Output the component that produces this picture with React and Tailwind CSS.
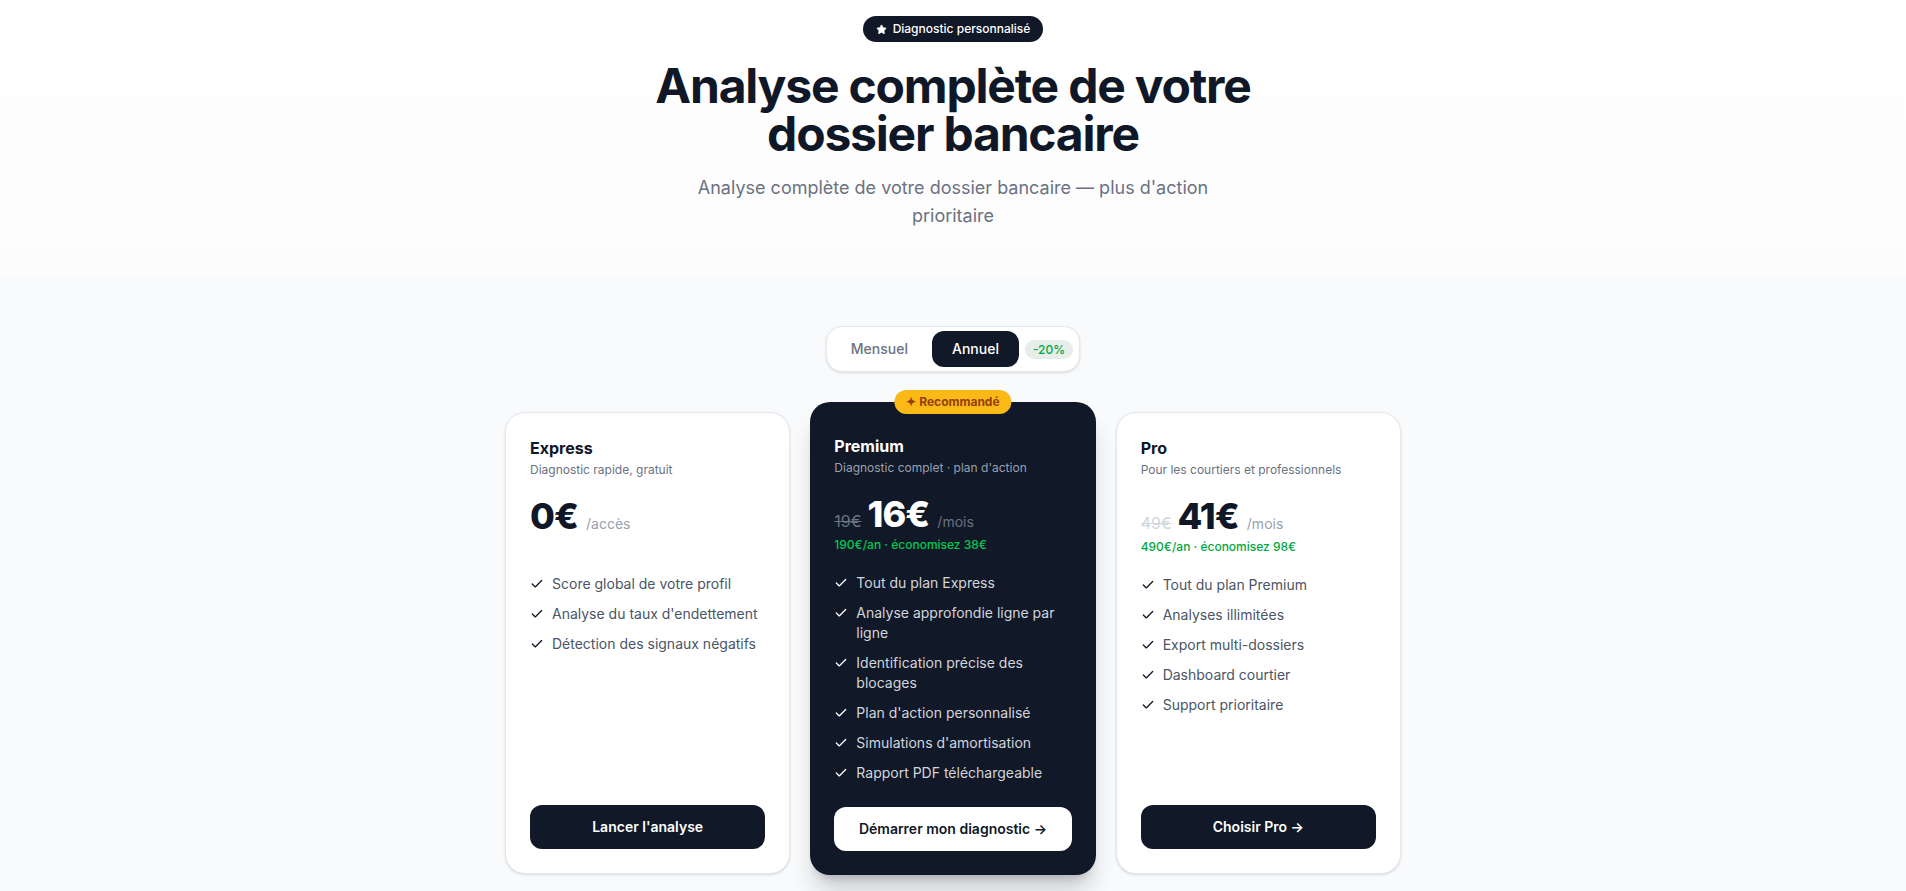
import React, { useState } from 'react';
import { Check, Star } from 'lucide-react';

const plans = [
  {
    id: 'express',
    name: 'Express',
    desc: 'Diagnostic rapide, gratuit',
    price: '0€',
    unit: '/accès',
    cta: "Lancer l'analyse",
    features: ['Score global de votre profil', "Analyse du taux d'endettement", 'Détection des signaux négatifs'],
  },
  {
    id: 'premium',
    name: 'Premium',
    desc: "Diagnostic complet · plan d'action",
    old: '19€',
    price: '16€',
    unit: '/mois',
    yearly: '190€/an · économisez 38€',
    cta: 'Démarrer mon diagnostic →',
    featured: true,
    features: [
      'Tout du plan Express',
      'Analyse approfondie ligne par ligne',
      'Identification précise des blocages',
      "Plan d'action personnalisé",
      "Simulations d'amortisation",
      'Rapport PDF téléchargeable',
    ],
  },
  {
    id: 'pro',
    name: 'Pro',
    desc: 'Pour les courtiers et professionnels',
    old: '49€',
    price: '41€',
    unit: '/mois',
    yearly: '490€/an · économisez 98€',
    cta: 'Choisir Pro →',
    features: ['Tout du plan Premium', 'Analyses illimitées', 'Export multi-dossiers', 'Dashboard courtier', 'Support prioritaire'],
  },
];

const PlanCard = ({ plan }) => {
  const dark = plan.featured;
  return (
    <div
      className={
        'relative flex flex-col rounded-[20px] ' +
        (dark
          ? 'bg-[#111827] px-6 pt-8 pb-6 -mt-[10px] -mb-px shadow-xl shadow-gray-900/20'
          : 'bg-white border border-gray-200 px-6 pt-[23px] pb-6 shadow-sm')
      }
    >
      {dark && (
        <span className="absolute top-0 left-1/2 -translate-x-1/2 -translate-y-1/2 rounded-full bg-[#fbb917] px-3 py-1 text-xs leading-4 font-bold text-[#92400e] whitespace-nowrap">
          ✦ Recommandé
        </span>
      )}

      <h3 className={'text-base leading-6 font-bold ' + (dark ? 'text-white' : 'text-gray-900')}>{plan.name}</h3>
      <p className={'mt-0.5 text-xs leading-4 ' + (dark ? 'text-gray-400' : 'text-gray-500')}>{plan.desc}</p>

      <div className="mt-5 flex items-baseline gap-1.5">
        {plan.old && (
          <span className={'text-base line-through ' + (dark ? 'text-gray-500' : 'text-gray-300')}>{plan.old}</span>
        )}
        <span className={'text-4xl leading-none font-extrabold tracking-tight ' + (dark ? 'text-white' : 'text-gray-900')}>
          {plan.price}
        </span>
        <span className={'ml-0.5 text-sm ' + (dark ? 'text-gray-500' : 'text-gray-400')}>{plan.unit}</span>
      </div>
      <p className={'mt-1 h-4 text-xs leading-4 font-medium ' + (dark ? 'text-green-500' : 'text-green-600')}>
        {plan.yearly}
      </p>

      <ul className="mt-5 flex-1 space-y-2.5">
        {plan.features.map((f) => (
          <li key={f} className={'flex items-start gap-2 text-sm leading-5 ' + (dark ? 'text-gray-300' : 'text-gray-600')}>
            <Check size={14} strokeWidth={2.25} className={'mt-[3px] shrink-0 ' + (dark ? 'text-white' : 'text-gray-900')} />
            <span>{f}</span>
          </li>
        ))}
      </ul>

      <button
        className={
          'mt-6 w-full rounded-xl py-3 text-sm leading-5 font-semibold cursor-pointer ' +
          (dark ? 'bg-white text-gray-900' : 'bg-[#111827] text-white')
        }
      >
        {plan.cta}
      </button>
    </div>
  );
};

const App = () => {
  const [billing, setBilling] = useState('annual');

  return (
    <div className="min-h-screen bg-gray-50 font-['Inter',sans-serif] text-gray-900">
      {/* Hero */}
      <section className="bg-linear-to-b from-white to-[#fcfcfd] pt-4 pb-12 text-center">
        <span className="inline-flex items-center gap-1.5 rounded-full bg-[#111827] px-[13px] py-[5px] text-xs leading-4 font-medium text-white">
          <Star size={11} fill="currentColor" strokeWidth={1.5} />
          Diagnostic personnalisé
        </span>
        <h1 className="mx-auto mt-5 max-w-2xl text-5xl leading-none font-bold tracking-tight text-gray-900">
          Analyse complète de votre dossier bancaire
        </h1>
        <p className="mx-auto mt-4 max-w-xl text-lg leading-7 text-gray-500">
          Analyse complète de votre dossier bancaire — plus d'action prioritaire
        </p>
      </section>

      {/* Pricing */}
      <section className="pt-12 pb-4">
        <div className="flex justify-center">
          <div className="flex items-center gap-1 rounded-2xl border border-gray-200 bg-white p-1 shadow-sm">
            <button
              onClick={() => setBilling('monthly')}
              className={
                'rounded-xl px-5 py-2 text-sm leading-5 font-medium cursor-pointer ' +
                (billing === 'monthly' ? 'bg-[#111827] text-white' : 'text-gray-500')
              }
            >
              Mensuel
            </button>
            <button
              onClick={() => setBilling('annual')}
              className={
                'rounded-xl px-5 py-2 text-sm leading-5 font-medium cursor-pointer ' +
                (billing === 'annual' ? 'bg-[#111827] text-white' : 'text-gray-500')
              }
            >
              Annuel
            </button>
            <span className="ml-0.5 mr-0.5 rounded-full bg-[#e7eeea] px-2 py-0.5 text-xs leading-[15px] font-medium text-green-600">
              -20%
            </span>
          </div>
        </div>

        <div className="mx-auto mt-10 grid max-w-4xl grid-cols-3 gap-5">
          {plans.map((p) => (
            <PlanCard key={p.id} plan={p} />
          ))}
        </div>
      </section>
    </div>
  );
};

export default App;
